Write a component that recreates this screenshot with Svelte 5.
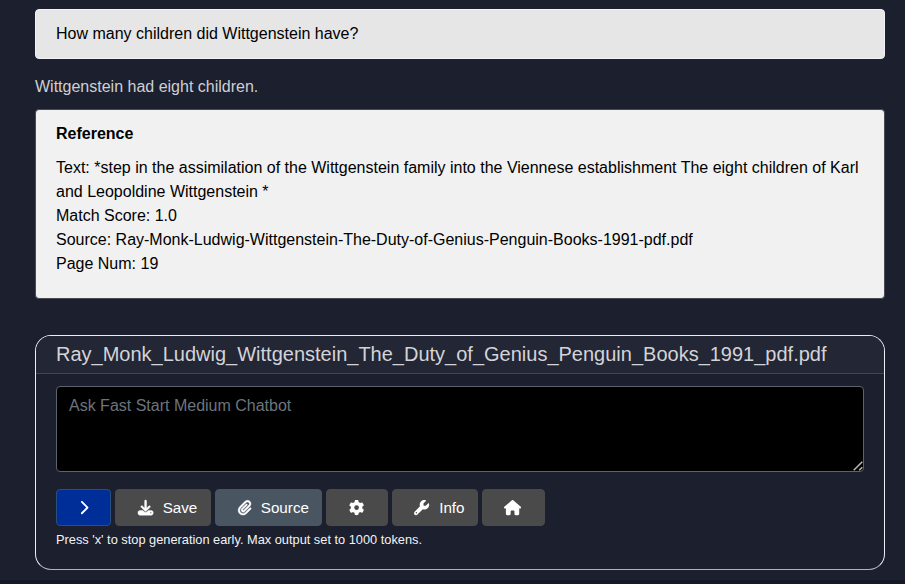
<script>
  const icons = {
    chevron: { w: 320, d: 'M310.6 233.4c12.5 12.5 12.5 32.8 0 45.3l-192 192c-12.5 12.5-32.8 12.5-45.3 0s-12.5-32.8 0-45.3L242.7 256 73.4 86.6c-12.5-12.5-12.5-32.8 0-45.3s32.8-12.5 45.3 0l192 192z' },
    download: { w: 512, bold: true, d: 'M288 32c0-17.7-14.3-32-32-32s-32 14.3-32 32V274.7l-73.4-73.4c-12.5-12.5-32.8-12.5-45.3 0s-12.5 32.8 0 45.3l128 128c12.5 12.5 32.8 12.5 45.3 0l128-128c12.5-12.5 12.5-32.8 0-45.3s-32.8-12.5-45.3 0L288 274.7V32zM64 352c-35.3 0-64 28.7-64 64v32c0 35.3 28.7 64 64 64H448c35.3 0 64-28.7 64-64V416c0-35.3-28.7-64-64-64H346.5l-45.3 45.3c-25 25-65.5 25-90.5 0L165.5 352H64zm368 56a24 24 0 1 1 0 48 24 24 0 1 1 0-48z' },
    clip: { w: 448, bold: true, d: 'M364.2 83.8c-24.4-24.4-64-24.4-88.4 0l-184 184c-42.1 42.1-42.1 110.3 0 152.4s110.3 42.1 152.4 0l152-152c10.9-10.9 28.7-10.9 39.6 0s10.9 28.7 0 39.6l-152 152c-64 64-167.6 64-231.6 0s-64-167.6 0-231.6l184-184c46.3-46.3 121.3-46.3 167.6 0s46.3 121.3 0 167.6l-176 176c-28.6 28.6-75 28.6-103.6 0s-28.6-75 0-103.6l144-144c10.9-10.9 28.7-10.9 39.6 0s10.9 28.7 0 39.6l-144 144c-6.7 6.7-6.7 17.7 0 24.4s17.7 6.7 24.4 0l176-176c24.4-24.4 24.4-64 0-88.4z' },
    gear: { w: 512, d: 'M495.9 166.6c3.2 8.7 .5 18.4-6.4 24.6l-43.3 39.4c1.1 8.3 1.7 16.8 1.7 25.4s-.6 17.1-1.7 25.4l43.3 39.4c6.9 6.2 9.6 15.9 6.4 24.6c-4.4 11.9-9.7 23.3-15.8 34.3l-4.7 8.1c-6.6 11-14 21.4-22.1 31.2c-5.9 7.2-15.7 9.6-24.5 6.8l-55.7-17.7c-13.4 10.3-28.2 18.9-44 25.4l-12.5 57.1c-2 9.1-9 16.3-18.2 17.8c-13.8 2.3-28 3.5-42.5 3.5s-28.7-1.2-42.5-3.5c-9.2-1.5-16.2-8.7-18.2-17.8l-12.5-57.1c-15.8-6.5-30.6-15.1-44-25.4L83.1 425.9c-8.8 2.8-18.6 .3-24.5-6.8c-8.1-9.8-15.5-20.2-22.1-31.2l-4.7-8.1c-6.1-11-11.4-22.4-15.8-34.3c-3.2-8.7-.5-18.4 6.4-24.6l43.3-39.4C64.6 273.1 64 264.6 64 256s.6-17.1 1.7-25.4L22.4 191.2c-6.9-6.2-9.6-15.9-6.4-24.6c4.4-11.9 9.7-23.3 15.8-34.3l4.7-8.1c6.6-11 14-21.4 22.1-31.2c5.9-7.2 15.7-9.6 24.5-6.8l55.7 17.7c13.4-10.3 28.2-18.9 44-25.4l12.5-57.1c2-9.1 9-16.3 18.2-17.8C227.3 1.2 241.5 0 256 0s28.7 1.2 42.5 3.5c9.2 1.5 16.2 8.7 18.2 17.8l12.5 57.1c15.8 6.5 30.6 15.1 44 25.4l55.7-17.7c8.8-2.8 18.6-.3 24.5 6.8c8.1 9.8 15.5 20.2 22.1 31.2l4.7 8.1c6.1 11 11.4 22.4 15.8 34.3zM256 336a80 80 0 1 0 0-160 80 80 0 1 0 0 160z' },
    wrench: { w: 512, d: 'M352 320c88.4 0 160-71.6 160-160c0-15.3-2.2-30.1-6.2-44.2c-3.1-10.8-16.4-13.2-24.3-5.3l-76.8 76.8c-3 3-7.1 4.7-11.3 4.7H336c-8.8 0-16-7.2-16-16V118.6c0-4.2 1.7-8.3 4.7-11.3l76.8-76.8c7.9-7.9 5.4-21.2-5.3-24.3C382.1 2.2 367.3 0 352 0C263.6 0 192 71.6 192 160c0 19.1 3.4 37.5 9.5 54.5L19.9 396.1C7.2 408.8 0 426.1 0 444.1C0 481.6 30.4 512 67.9 512c18 0 35.3-7.2 48-19.9L297.5 310.5c17 6.2 35.4 9.5 54.5 9.5zM80 408a24 24 0 1 1 0 48 24 24 0 1 1 0-48z' },
    home: { w: 576, d: 'M575.8 255.5c0 18-15 32.1-32 32.1h-32l.7 160.2c0 2.7-.2 5.4-.5 8.1V472c0 22.1-17.9 40-40 40H456c-1.1 0-2.2 0-3.3-.1c-1.4 .1-2.8 .1-4.2 .1H416 392c-22.1 0-40-17.9-40-40V448 384c0-17.7-14.3-32-32-32H256c-17.7 0-32 14.3-32 32v64 24c0 22.1-17.9 40-40 40H160 128.1c-1.5 0-3-.1-4.5-.2c-1.2 .1-2.4 .2-3.6 .2H104c-22.1 0-40-17.9-40-40V360c0-.9 0-1.9 .1-2.8V287.6H32c-18 0-32-14-32-32.1c0-9 3-17 10-24L266.4 8c7-7 15-8 22-8s15 2 21 7L564.8 231.5c8 7 12 15 11 24z' }
  };
</script>

{#snippet icon(name)}
  <svg viewBox="0 0 {icons[name].w} 512" width={icons[name].w * 15.2 / 512} height="15.2" aria-hidden="true">
    <path d={icons[name].d} fill="currentColor" class:bold={icons[name].bold} />
  </svg>
{/snippet}

<main>
  <div class="question">How many children did Wittgenstein have?</div>
  <p class="answer">Wittgenstein had eight children.</p>
  <section class="reference">
    <h2>Reference</h2>
    <p>
      Text: *step in the assimilation of the Wittgenstein family into the Viennese establishment The eight children of Karl and Leopoldine Wittgenstein *<br />
      Match Score: 1.0<br />
      Source: Ray-Monk-Ludwig-Wittgenstein-The-Duty-of-Genius-Penguin-Books-1991-pdf.pdf<br />
      Page Num: 19
    </p>
  </section>
  <section class="panel">
    <header>Ray_Monk_Ludwig_Wittgenstein_The_Duty_of_Genius_Penguin_Books_1991_pdf.pdf</header>
    <div class="body">
      <div class="field">
        <textarea placeholder="Ask Fast Start Medium Chatbot"></textarea>
        <svg class="grip" width="10" height="10" viewBox="0 0 10 10" aria-hidden="true">
          <path d="M.7 9.3 9.3.7M6.2 9.3 9.3 6.2" stroke="#b9b9b5" stroke-width="1.5" fill="none" />
        </svg>
      </div>
      <div class="buttons">
        <button class="send" aria-label="Send">{@render icon('chevron')}</button>
        <button class="save">{@render icon('download')}<span>Save</span></button>
        <button class="source">{@render icon('clip')}<span>Source</span></button>
        <button class="settings" aria-label="Settings">{@render icon('gear')}</button>
        <button class="info">{@render icon('wrench')}<span>Info</span></button>
        <button class="home" aria-label="Home">{@render icon('home')}</button>
      </div>
      <div class="hint">Press 'x' to stop generation early. Max output set to 1000 tokens.</div>
    </div>
  </section>
</main>

<style>
  :global(body) { background: #1c1f2d; }
  main, textarea, button { font-family: "Liberation Sans", Arial, sans-serif; font-size: 16px; }
  main {
    box-sizing: border-box;
    height: 584px;
    padding: 9px 20px 0 35px;
    line-height: 24px;
    overflow: hidden;
    border-bottom: 4px solid #171825;
  }
  .question {
    box-sizing: border-box;
    height: 50px;
    padding: 12px 20px;
    border: 1px solid #f2f2f5;
    border-radius: 4px;
    background: #e6e6e6;
    color: #000;
  }
  .answer { margin: 16px 0 10px; color: #ced0d3; }
  .reference {
    box-sizing: border-box;
    height: 190px;
    padding: 12px 20px;
    border: 1px solid #494b50;
    border-radius: 4px;
    background: #f1f1f1;
    color: #000;
  }
  h2 { margin: 0 0 10px; font-size: 16px; line-height: 24px; }
  .reference p { margin: 0; }
  .panel {
    box-sizing: border-box;
    height: 235px;
    margin-top: 36px;
    border: 1px solid #eceef6;
    border-bottom-color: #b0b2bd;
    border-radius: 16px;
    overflow: hidden;
  }
  header {
    height: 37px;
    padding: 0 20px;
    background: #232634;
    border-bottom: 1px solid #414451;
    color: #d3d4d8;
    font-size: 20px;
    line-height: 37px;
    white-space: nowrap;
  }
  .body { padding: 12px 20px 0; }
  .field { position: relative; height: 86px; }
  textarea {
    box-sizing: border-box;
    display: block;
    width: 100%;
    height: 86px;
    margin: 0;
    padding: 7px 12px;
    border: 1px solid #5d636b;
    border-radius: 4px;
    background: #000;
    color: #fff;
    line-height: 24px;
    resize: none;
    outline: none;
  }
  textarea::placeholder { color: #6c757d; opacity: 1; }
  .grip { position: absolute; right: 1px; bottom: 1px; }
  .buttons { display: flex; gap: 4px; margin-top: 17px; }
  button {
    box-sizing: border-box;
    display: flex;
    align-items: center;
    justify-content: center;
    height: 37px;
    margin: 0;
    padding: 0;
    border: 1px solid #4a4a4a;
    border-radius: 4px;
    background: #4a4a4a;
    color: #fff;
    font-size: 15.2px;
    line-height: 24px;
  }
  button svg { overflow: visible; }
  .bold { stroke: currentColor; stroke-width: 14px; }
  .save, .source, .info { justify-content: flex-start; padding-left: 21.5px; }
  .save span, .source span, .info span { margin-left: 10px; }
  .send { width: 55px; background: #002e99; border-color: #29507d; }
  .save { width: 96px; }
  .source { width: 107px; background: #4a5562; border-color: #4a5562; }
  .settings { width: 61.5px; }
  .info { width: 86px; }
  .home { width: 63px; }
  .hint { margin-top: 4px; color: #f3f3f5; font-size: 12.8px; line-height: 20px; }
</style>
